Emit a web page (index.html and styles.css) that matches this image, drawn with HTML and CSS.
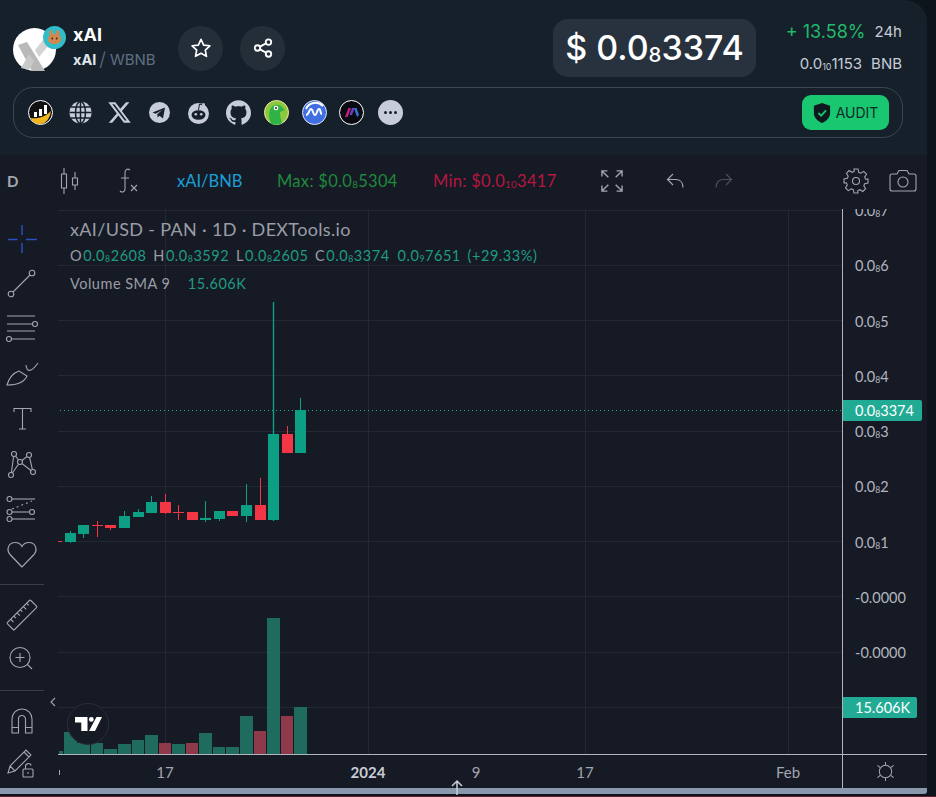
FILE: index.html
```html
<!DOCTYPE html>
<html lang="en">
<head>
<meta charset="utf-8">
<title>xAI / WBNB</title>
<link rel="stylesheet" href="styles.css">
</head>
<body>
<div class="app">
  <header class="head">
    <div class="top">
      <div class="logo">
        <svg class="logo-x" viewBox="0 0 43 43"><circle cx="21.5" cy="21.5" r="21.5" fill="#fff"/><path d="M5 17l9-3 18 29H19z" fill="#b9b9b9"/><path d="M30 12l6 5-10 12-4-7z" fill="#d4d4d4"/><path d="M8 40l8-14 5 7-5 9z" fill="#c9c9c9"/></svg>
        <svg class="badge" viewBox="0 0 23 23"><circle cx="11.5" cy="11.5" r="11.5" fill="#31bcc9"/><path d="M8 4c1.4 0 2 2 2 4h3c0-2 .6-4 2-4s1.800 3 1.300 5.300c1.200 1 1.900 2.300 1.900 3.700 0 3-3 5-6.700 5S4.800 16 4.800 13c0-1.400.7-2.700 1.900-3.700C6.200 7 6.600 4 8 4z" fill="#d1884f"/><circle cx="9.300" cy="12.500" r=".9" fill="#3a2a20"/><circle cx="13.700" cy="12.500" r=".9" fill="#3a2a20"/></svg>
      </div>
      <div class="names">
        <div class="title">xAI</div>
        <div class="pair"><b>xAI</b><i>/</i><span>WBNB</span></div>
      </div>
      <button class="round">
        <svg viewBox="0 0 24 24" class="ic22"><path d="M12 2.500l2.900 6.300 6.800.8-5 4.700 1.300 6.800-6-3.400-6 3.400 1.300-6.800-5-4.700 6.800-.8z" fill="none" stroke="#fff" stroke-width="1.800" stroke-linejoin="round"/></svg>
      </button>
      <button class="round">
        <svg viewBox="0 0 24 24" class="ic22"><g fill="none" stroke="#fff" stroke-width="2"><circle cx="18" cy="5.500" r="3"/><circle cx="6" cy="12" r="3"/><circle cx="18" cy="18.500" r="3"/><path d="M8.700 10.500l6.600-3.500M8.700 13.500l6.600 3.500"/></g></svg>
      </button>
      <div class="price">$ 0.0<sub>8</sub>3374</div>
      <div class="change">
        <div class="row1"><span class="pct">+ 13.58%</span><span>24h</span></div>
        <div class="row2"><span>0.0<sub>10</sub>1153</span><span>BNB</span></div>
      </div>
    </div>
    <nav class="social">
      <div class="links">
        <svg class="sico" viewBox="0 0 25 25"><circle cx="12.500" cy="12.500" r="12" fill="#111" stroke="#fff"/><path d="M3 18c7 1 14-1 20-7-1 7-5 13-11 13-4 0-8-2-9-6z" fill="#efb51e"/><path d="M6 12h3v5H6zM11 9h3v7h-3zM16 5h3v9h-3z" fill="#fff"/></svg>
        <svg class="sico" viewBox="0 0 25 25"><circle cx="12.500" cy="12.500" r="11" fill="#c6ccd8"/><g fill="none" stroke="#16202a" stroke-width="1.500"><ellipse cx="12.500" cy="12.500" rx="5" ry="11"/><path d="M1.500 12.500h22M3 7h19M3 18h19M12.500 1.500v22"/></g></svg>
        <svg class="sico" viewBox="0 0 24 24"><path fill="#c6ccd8" d="M18.244 2.250h3.308l-7.227 8.260 8.502 11.240H16.170l-5.214-6.817L4.990 21.750H1.680l7.730-8.835L1.254 2.250H8.080l4.713 6.231zm-1.161 17.520h1.833L7.084 4.126H5.117z"/></svg>
        <svg class="sico" viewBox="0 0 25 25"><circle cx="12.500" cy="12.500" r="10.500" fill="#c6ccd8"/><path d="M5.500 12.500l12.500-5-2 11-3.500-2.800-1.800 1.800-.5-3.200 5-4.300-6.500 3.800z" fill="#16202a"/></svg>
        <svg class="sico" viewBox="0 0 25 25"><circle cx="12.500" cy="13.500" r="10.500" fill="#c6ccd8"/><ellipse cx="12.500" cy="15" rx="7" ry="4.800" fill="#16202a"/><circle cx="9.800" cy="14.300" r="1.300" fill="#c6ccd8"/><circle cx="15.200" cy="14.300" r="1.300" fill="#c6ccd8"/><path d="M12.500 10l1-6 3.500 1" fill="none" stroke="#16202a" stroke-width="1"/><circle cx="17.500" cy="4.500" r="1.500" fill="#c6ccd8"/></svg>
        <svg class="sico" viewBox="0 0 24 24"><path fill="#c6ccd8" d="M12 .297c-6.630 0-12 5.373-12 12 0 5.303 3.438 9.800 8.205 11.385.6.113.82-.258.82-.577 0-.285-.01-1.040-.015-2.040-3.338.724-4.042-1.610-4.042-1.610C4.422 18.070 3.633 17.700 3.633 17.700c-1.087-.744.084-.729.084-.729 1.205.084 1.838 1.236 1.838 1.236 1.070 1.835 2.809 1.305 3.495.998.108-.776.417-1.305.76-1.605-2.665-.3-5.466-1.332-5.466-5.930 0-1.310.465-2.380 1.235-3.220-.135-.303-.54-1.523.105-3.176 0 0 1.005-.322 3.300 1.230.96-.267 1.980-.399 3-.405 1.020.006 2.040.138 3 .405 2.280-1.552 3.285-1.230 3.285-1.230.645 1.653.24 2.873.12 3.176.765.84 1.230 1.910 1.230 3.220 0 4.610-2.805 5.625-5.475 5.920.42.36.81 1.096.81 2.220 0 1.606-.015 2.896-.015 3.286 0 .315.21.69.825.57C20.565 22.092 24 17.592 24 12.297c0-6.627-5.373-12-12-12"/></svg>
        <svg class="sico" viewBox="0 0 25 25"><circle cx="12.500" cy="12.500" r="12" fill="#8dc63f" stroke="#f0eda0"/><path d="M7 24c-2-6-3-12 0-16 3-4 8-4 11-1 1 1 2 3 3 3l-5 2c0 4 1 8 2 11-3 2-8 2-11 1z" fill="#2fb344"/><circle cx="12" cy="8" r="2.300" fill="#fff"/><circle cx="12" cy="8" r="1" fill="#222"/></svg>
        <svg class="sico" viewBox="0 0 25 25"><circle cx="12.500" cy="12.500" r="12" fill="#3f6fe0" stroke="#dfe6f8"/><path d="M4 15c3 0 3-6 5-6s2 6 4 6 2-6 4-6 1 5 3 5" fill="none" stroke="#fff" stroke-width="2"/><path d="M21 6c-5-5-14-4-17 3" fill="none" stroke="#fff" stroke-width="2"/></svg>
        <svg class="sico" viewBox="0 0 25 25"><circle cx="12.500" cy="12.500" r="12" fill="#0a0a12" stroke="#fff"/><path d="M6 17l3.500-9h2.500l-3.500 9z" fill="#c2257f"/><path d="M10.500 15l2.500-7h2.500l-2.500 7z" fill="#7a3bd0"/><path d="M15 8h2.500l2.500 7-2 2z" fill="#3077d8"/></svg>
        <svg class="sico" viewBox="0 0 25 25"><circle cx="12.500" cy="12.500" r="12.500" fill="#c6ccd8"/><circle cx="7.500" cy="12.500" r="1.500" fill="#16202a"/><circle cx="12.500" cy="12.500" r="1.500" fill="#16202a"/><circle cx="17.500" cy="12.500" r="1.500" fill="#16202a"/></svg>
      </div>
      <button class="audit">
        <svg viewBox="0 0 20 22" class="shield"><path d="M10 0l9 3v8c0 5-4 9-9 11-5-2-9-6-9-11V3z" fill="#10181f"/><path d="M6 11l3 3 5.500-6" fill="none" stroke="#18c76f" stroke-width="2"/></svg>
        AUDIT
      </button>
    </nav>
  </header>

  <section class="toolbar">
    <span class="interval">D</span>
    <svg class="tb tb-candle" viewBox="0 0 22 28"><path d="M5 1v6M5 21v6M2.500 7h5v14h-5zM16 5v6M16 18v5M13.500 11h5v7h-5z" fill="none" stroke="#a3a6af" stroke-width="1.100"/></svg>
    <svg class="tb tb-fx" viewBox="0 0 24 28"><path d="M13 3c-3-2-5 0-5 3v16c0 3-3 4-5 2M4 11h8M14 18l6 6M20 18l-6 6" fill="none" stroke="#a3a6af" stroke-width="1.100"/></svg>
    <span class="sym">xAI/BNB</span>
    <span class="max">Max: $0.0<sub>8</sub>5304</span>
    <span class="min">Min: $0.0<sub>10</sub>3417</span>
    <svg class="tb tb-exp" viewBox="0 0 24 24"><g fill="none" stroke="#a3a6af" stroke-width="1.500"><path d="M1 7V1h6M1 1l7 7M23 7V1h-6M23 1l-7 7M1 17v6h6M1 23l7-7M23 17v6h-6M23 23l-7-7"/></g></svg>
    <svg class="tb tb-undo" viewBox="0 0 20 18"><path d="M7 2L1.500 7.500 7 13M2 7.500h8c4 0 7 3 7 8" fill="none" stroke="#a3a6af" stroke-width="1.200"/></svg>
    <svg class="tb tb-redo" viewBox="0 0 20 18"><path d="M13 2l5.500 5.500L13 13M18 7.500h-8c-4 0-7 3-7 8" fill="none" stroke="#4d505a" stroke-width="1.200"/></svg>
    <svg class="tb tb-gear" viewBox="0 0 26 26"><g fill="none" stroke="#a3a6af" stroke-width="1.100"><circle cx="13" cy="13" r="3.500"/><path d="M11 1h4l.7 3.300 2.100.9 2.900-1.800 2.800 2.800-1.800 2.900.9 2.100L25 11v4l-3.300.7-.9 2.100 1.800 2.900-2.800 2.800-2.900-1.800-2.100.9L15 25h-4l-.7-3.300-2.100-.9-2.900 1.800-2.800-2.800 1.800-2.900-.9-2.100L1 15v-4l3.300-.7.9-2.100-1.800-2.900 2.800-2.800 2.900 1.800 2.100-.9z"/></g></svg>
    <svg class="tb tb-cam" viewBox="0 0 28 24"><g fill="none" stroke="#a3a6af" stroke-width="1.100"><path d="M3 5h5l2-3.500h8L20 5h5c1 0 2 1 2 2v13c0 1-1 2-2 2H3c-1 0-2-1-2-2V7c0-1 1-2 2-2z"/><circle cx="14" cy="13" r="5"/></g></svg>
  </section>

  <main class="chart">
    <aside class="tools">
      <div class="tool-group first">
        <div class="tool"><svg viewBox="0 0 30 30"><path d="M15 1v10M15 19v10M1 15.500h9.500M19 15.500h11" fill="none" stroke="#2b52c4" stroke-width="1.400"/></svg></div>
        <div class="tool"><svg viewBox="0 0 30 30"><g class="st"><circle cx="4" cy="25" r="2.800"/><circle cx="25" cy="4" r="2.800"/><path d="M6 23L23 6"/></g></svg></div>
        <div class="tool"><svg viewBox="0 0 30 30"><g class="st"><path d="M0 2h28M0 10h25.500M0 17h28M4.500 25H28"/><circle cx="28" cy="10" r="2.500"/><circle cx="2" cy="25" r="2.500"/></g></svg></div>
        <div class="tool"><svg viewBox="0 0 30 30"><g class="st"><path d="M0 26C2 19 6 14 12 12l8 5c-3 7-10 9-20 9zM19 6c.5 6 4 9 12-2"/></g></svg></div>
        <div class="tool"><svg viewBox="0 0 30 30"><g class="st"><path d="M7 8V4.500h17V8M15.500 4.500V25M12 25h7"/></g></svg></div>
        <div class="tool"><svg viewBox="0 0 30 30"><g class="st"><path d="M4 26L7 5l6 8 9-7 4 17-13-10z"/><circle cx="7" cy="5" r="2.500" class="bgf"/><circle cx="22" cy="6" r="2.500" class="bgf"/><circle cx="13" cy="13" r="2.500" class="bgf"/><circle cx="4" cy="26" r="2.500" class="bgf"/><circle cx="26" cy="23" r="2.500" class="bgf"/></g></svg></div>
        <div class="tool"><svg viewBox="0 0 30 30"><g class="st"><circle cx="2.500" cy="5" r="2.500"/><path d="M5 5h23"/><circle cx="2.500" cy="18" r="2.500"/><path d="M5 18h17"/><circle cx="25" cy="18" r="2.500"/><circle cx="2.500" cy="25" r="2.500"/><path d="M5 25h23"/><path d="M5 15l20-8" stroke-dasharray="2 3"/></g></svg></div>
        <div class="tool"><svg viewBox="0 0 30 30"><path d="M15 28L3 15.500C-1 10.500 1.500 3.500 8 3.500c3.500 0 6 2 7 4 1-2 3.500-4 7-4 6.500 0 9 7 5 12z" fill="none" stroke="#a3a6af" stroke-width="1.200"/></svg></div>
      </div>
      <hr class="sep">
      <div class="tool-group second">
        <div class="tool"><svg viewBox="0 0 30 30"><g class="st" transform="rotate(-45 15 15)"><rect x="-1.500" y="10" width="33" height="10" rx="1"/><path d="M4 10v4M8.500 10v3M13 10v4M17.500 10v3M22 10v4M26.500 10v3"/></g></svg></div>
        <div class="tool"><svg viewBox="0 0 30 30"><g class="st"><circle cx="13" cy="13.500" r="10"/><path d="M8.500 13.500h9M13 9v9M20.500 20.500L25 25"/></g></svg></div>
      </div>
      <hr class="sep">
      <div class="tool-group third">
        <div class="tool"><svg viewBox="0 0 30 30"><g class="st"><path d="M5 27V13a10 10 0 0 1 20 0v14h-6.500V13a3.500 3.500 0 0 0-7 0v14zM5 21.500h6.500M18.500 21.500H25"/></g></svg></div>
        <div class="tool"><svg viewBox="0 0 30 30"><g class="st"><path d="M1 25l2-7L19 2l5 5L8 23zM3 18l5 5M17 4l5 5"/><rect x="16" y="21" width="10" height="8" rx="1"/><path d="M18.500 21v-2.500a3 3 0 0 1 5.800-1M21 24v2"/></g></svg></div>
      </div>
      <svg class="collapse" viewBox="0 0 6 10"><path d="M5 1L1 5l4 4" fill="none" stroke="#a3a6af" stroke-width="1.100"/></svg>
    </aside>

    <div class="pane">
      <svg class="plot" viewBox="58 208 784 546" preserveAspectRatio="none">
        <g class="grid">
          <path d="M58 210.500H842M58 265.500H842M58 320.500H842M58 375.500H842M58 431.500H842M58 486.500H842M58 541.500H842M58 596.500H842M58 652.500H842M58 707.500H842"/>
          <path d="M165.500 208V754M368.500 208V754M585.500 208V754M788.500 208V754"/>
        </g>
        <path d="M60 410.500H842" class="last"/>
        <g class="vol-up">
          <rect x="59" y="751" width="4" height="3"/><rect x="64" y="732" width="13" height="22"/><rect x="77" y="743" width="13" height="11"/><rect x="91" y="743" width="12" height="11"/><rect x="104" y="749" width="13" height="5"/><rect x="118" y="744" width="13" height="10"/><rect x="132" y="740" width="12" height="14"/><rect x="145" y="735" width="13" height="19"/><rect x="172" y="744" width="13" height="10"/><rect x="199" y="733" width="13" height="21"/><rect x="213" y="747" width="12" height="7"/><rect x="226" y="747" width="13" height="7"/><rect x="240" y="716" width="13" height="38"/><rect x="267" y="618" width="13" height="136"/><rect x="294" y="707" width="13" height="47"/>
        </g>
        <g class="vol-dn">
          <rect x="159" y="743" width="12" height="11"/><rect x="186" y="743" width="12" height="11"/><rect x="254" y="731" width="12" height="23"/><rect x="281" y="716" width="12" height="38"/>
        </g>
        <g class="c-up">
          <rect x="65" y="533" width="11" height="9"/><rect x="70" y="531" width="1" height="12"/>
          <rect x="78" y="525" width="11" height="9"/><rect x="83" y="525" width="1" height="13"/>
          <rect x="119" y="516" width="11" height="12"/><rect x="124" y="511" width="1" height="17"/>
          <rect x="133" y="512" width="11" height="5"/><rect x="138" y="509" width="1" height="8"/>
          <rect x="146" y="502" width="11" height="11"/><rect x="151" y="496" width="1" height="17"/>
          <rect x="200" y="518" width="11" height="2"/><rect x="205" y="501" width="1" height="21"/>
          <rect x="214" y="511" width="11" height="8"/><rect x="219" y="511" width="1" height="10"/>
          <rect x="241" y="505" width="11" height="11"/><rect x="246" y="484" width="1" height="38"/>
          <rect x="268" y="434" width="11" height="86"/><rect x="272.800" y="302" width="1.400" height="219"/>
          <rect x="295" y="410" width="11" height="43"/><rect x="300" y="398" width="1" height="55"/>
        </g>
        <g class="c-dn">
          <rect x="58" y="541" width="4" height="1"/>
          <rect x="92" y="525" width="11" height="1"/><rect x="97" y="521" width="1" height="16"/>
          <rect x="105" y="525" width="11" height="3"/><rect x="110" y="525" width="1" height="5"/>
          <rect x="160" y="502" width="11" height="11"/><rect x="165" y="494" width="1" height="20"/>
          <rect x="173" y="512" width="11" height="1"/><rect x="178" y="505" width="1" height="15"/>
          <rect x="187" y="512" width="11" height="8"/>
          <rect x="227" y="511" width="11" height="5"/>
          <rect x="255" y="505" width="11" height="15"/><rect x="260" y="478" width="1" height="42"/>
          <rect x="282" y="434" width="11" height="19"/><rect x="287" y="426" width="1" height="27"/>
        </g>
      </svg>
      <div class="legend">
        <div class="l-title">xAI/USD - PAN · 1D · DEXTools.io</div>
        <div class="l-ohlc">O<em>0.0<sub>8</sub>2608</em> H<em>0.0<sub>8</sub>3592</em> L<em>0.0<sub>8</sub>2605</em> C<em>0.0<sub>8</sub>3374</em> <em>0.0<sub>9</sub>7651 (+29.33%)</em></div>
        <div class="l-vol">Volume SMA 9 <em>15.606K</em></div>
      </div>
      <div class="tvlogo">
        <svg viewBox="0 0 27 14"><path d="M0 0h12.500v14H6.300V5.500H0zM21.500 0h5.500l-7 14h-6z" fill="#fff"/><circle cx="16.300" cy="2.400" r="2.400" fill="#fff"/></svg>
      </div>
    </div>

    <div class="axis">
      <div class="ticks">
        <div>0.0<sub>8</sub>7</div><div>0.0<sub>8</sub>6</div><div>0.0<sub>8</sub>5</div><div>0.0<sub>8</sub>4</div><div>0.0<sub>8</sub>3</div><div>0.0<sub>8</sub>2</div><div>0.0<sub>8</sub>1</div><div>-0.0000</div><div>-0.0000</div>
      </div>
      <div class="tag tag-price">0.0<sub>8</sub>3374</div>
      <div class="tag tag-vol">15.606K</div>
    </div>

    <div class="times">
      <span class="t1">17</span><span class="t2">2024</span><span class="t3">9</span><span class="t4">17</span><span class="t5">Feb</span>
    </div>
    <div class="corner">
      <svg viewBox="0 0 20 20"><g fill="none" stroke="#a3a6af" stroke-width="1.100"><circle cx="10" cy="10" r="6.500"/><path d="M10 0v3.500M10 16.500V20M1.500 3.500l3 2.500M18.500 3.500l-3 2.500M1.500 16.500l3-2.500M18.500 16.500l-3-2.500"/></g></svg>
    </div>
  </main>
  <div class="scroll"></div>
  <svg class="uparrow" viewBox="0 0 14 16"><path d="M7 16V2M2 7l5-5 5 5" fill="none" stroke="#c6ccd8" stroke-width="1.500"/></svg>
</div>
<div class="redline"></div>
</body>
</html>
```

FILE: styles.css
```css
* { box-sizing: border-box; }
html, body { margin: 0; padding: 0; }
body {
  width: 936px;
  height: 797px;
  overflow: hidden;
  background: #0d141b;
  position: relative;
  font-family: "Inter", "Liberation Sans", sans-serif;
}
sub {
  font-size: 60%;
  line-height: 0;
  vertical-align: -0.12em;
}
.app { width: 927px; height: 796px; display: flex; flex-direction: column; position: relative; }

/* header */
.head {
  height: 155px;
  flex: none;
  background: #16202a;
  border-top-right-radius: 22px;
  padding: 19px 24px 0 13px;
  color: #fff;
}
.top { display: flex; align-items: center; height: 58px; }
.logo { position: relative; width: 43px; height: 43px; margin-top: 2px; flex: none; }
.logo-x { width: 43px; height: 43px; display: block; }
.badge { position: absolute; left: 30px; width: 23px; height: 23px; top: -2px; }
.names { margin-left: 17px; width: 105px; }
.title { font-size: 18px; font-weight: 700; line-height: 22px; margin-top: -2px; }
.pair { font-size: 15px; line-height: 20px; margin-top: 4px; color: #5f6f85; display: flex; align-items: center; white-space: nowrap; }
.pair b { color: #dfe4ec; font-weight: 700; font-size: 14.500px; }
.pair i { font-style: normal; font-size: 19px; font-weight: 300; margin: 0 4px 0 3px; line-height: 18px; }
.round {
  width: 45px; height: 45px; border-radius: 50%; border: 0; padding: 0;
  background: #232e39; margin-right: 18px;
  display: flex; align-items: center; justify-content: center; flex: none;
}
.round + .round { margin-left: -1px; }
.ic22 { width: 22px; height: 22px; }
.price {
  margin-left: auto;
  width: 203px; height: 58px;
  background: #27323e; border-radius: 15px;
  font-size: 34px; font-weight: 500; line-height: 58px; text-align: center; color: #fff;
  white-space: nowrap;
}
.change { width: 119px; margin-left: 27px; margin-right: 1px; font-size: 15px; color: #c6ccd8; }
.row1, .row2 { display: flex; justify-content: flex-end; white-space: nowrap; }
.row1 { gap: 9px; line-height: 26px; }
.row2 { gap: 9px; line-height: 26px; margin-top: 6px; }
.pct { color: #20b96b; font-size: 18px; }

.social {
  margin-top: 10px;
  width: 890px; height: 51px;
  border: 1px solid #3a4652;
  border-radius: 20px;
  display: flex; align-items: center; justify-content: space-between;
  padding: 0 13px 0 14px;
}
.links { display: flex; align-items: center; gap: 14.500px; }
.sico { width: 25px; height: 25px; display: block; flex: none; }
.sico:nth-child(7) { margin-left: -1px; }
.sico:nth-child(8) { margin-left: -2px; }
.sico:nth-child(9) { margin-left: -2.500px; }
.audit {
  width: 87px; height: 35px;
  background: #18c76f; border: 0; border-radius: 9px;
  color: #14282a; font: 400 14px "Inter", sans-serif;
  display: flex; align-items: center; justify-content: center; gap: 5px; padding: 0;
}
.shield { width: 18px; height: 20px; }

/* top chart toolbar */
.toolbar {
  height: 54px; flex: none;
  padding-bottom: 2px;
  background: #161a25;
  display: flex; align-items: center;
  font-family: "Lato", "Liberation Sans", sans-serif;
  font-size: 16.500px;
  white-space: nowrap;
}
.interval { margin-left: 7px; font-weight: 700; color: #a3a6af; font-size: 15px; width: 11px; }
.tb { display: block; flex: none; }
.tb-candle { width: 22px; height: 28px; margin-left: 41px; }
.tb-fx { width: 24px; height: 28px; margin-left: 36px; }
.sym { color: #1aa0d8; margin-left: 36px; width: 100px; }
.max { color: #1f8a3c; width: 156px; letter-spacing: .3px; }
.min { color: #b5173f; width: 166px; letter-spacing: .3px; }
.tb-exp { width: 22px; height: 22px; margin-left: 2px; }
.tb-undo { width: 20px; height: 18px; margin-left: 43px; }
.tb-redo { width: 20px; height: 18px; margin-left: 27px; }
.tb-gear { width: 26px; height: 26px; margin-left: 110px; }
.tb-cam { width: 28px; height: 24px; margin-left: 20px; }

/* chart */
.chart {
  flex: 1;
  background: #161a25;
  display: grid;
  grid-template-columns: 58px 784px 85px;
  grid-template-rows: 545px 34px;
  min-height: 0;
}
.tools { grid-row: 1 / 3; position: relative; width: 58px; }
.tool-group { width: 44px; }
.first { padding-top: 7.500px; }
.tool { height: 45px; display: flex; align-items: center; justify-content: center; }
.tool svg { width: 30px; height: 30px; overflow: visible; display: block; }
.st { fill: none; stroke: #a3a6af; stroke-width: 1.100; }
.bgf { fill: #161a25; }
.sep { width: 44px; height: 1px; background: #3a3e49; border: 0; margin: 0; }
.first + .sep { margin-top: 7px; }
.second .tool { height: 44px; }
.second { padding-top: 8px; padding-bottom: 9px; }
.third { padding-top: 9px; }
.third .tool { height: 42px; }
.collapse { position: absolute; left: 50px; top: 488px; width: 6px; height: 10px; }

.pane { position: relative; overflow: hidden; }
.plot { width: 784px; height: 546px; display: block; position: absolute; left: 0; top: -1px; }
.grid path { stroke: #242833; stroke-width: 1; fill: none; }
.last { stroke: #22ab94; stroke-width: 1; stroke-dasharray: 1 3; fill: none; }
.vol-up rect { fill: #1f6b5e; }
.vol-dn rect { fill: #8f3a4a; }
.c-up rect { fill: #0d9f83; }
.c-dn rect { fill: #f23645; }
.legend {
  position: absolute; left: 12px; top: 7px;
  font-family: "Lato", "Liberation Sans", sans-serif;
  color: #9a9da6; white-space: nowrap;
}
.legend em { font-style: normal; color: #1f9b82; }
.l-title { font-size: 18px; line-height: 26px; letter-spacing: .33px; }
.l-ohlc { font-size: 14.500px; line-height: 22px; margin-top: 3px; letter-spacing: .55px; word-spacing: 2.500px; }
.l-ohlc em { margin-left: 1px; }
.l-vol { font-size: 14.500px; line-height: 22px; margin-top: 6px; letter-spacing: .5px; }
.l-vol em { margin-left: 13px; }
.tvlogo {
  position: absolute; left: 9px; top: 494px;
  width: 42px; height: 42px; border-radius: 50%;
  background: #161a25; border: 1.500px solid #2a2e39;
  display: flex; align-items: center; justify-content: center;
}
.tvlogo svg { width: 27px; height: 14px; }

.axis {
  position: relative; overflow: hidden;
  border-left: 1px solid #b2b5be;
  font-family: "Lato", "Liberation Sans", sans-serif;
  color: #b2b5be; font-size: 14.500px;
}
.ticks { margin-top: -26px; padding-left: 12px; }
.ticks div { height: 55.300px; line-height: 55.300px; white-space: nowrap; }
.tag {
  position: absolute; left: 0; height: 21px; line-height: 21px;
  background: #22ab94; color: #fff; padding-left: 12px;
  font-size: 14.500px; border-radius: 0 2px 2px 0; white-space: nowrap;
}
.tag-price { top: 191px; width: 79px; }
.tag-vol { top: 488px; width: 74px; }

.times {
  display: grid;
  grid-template-columns: 214px 192px 24px 194px 52px 108px;
  border-top: 1px solid #b2b5be;
  font-family: "Lato", "Liberation Sans", sans-serif;
  font-size: 15px; color: #a3a6af; line-height: 34px; text-align: center;
  position: relative;
}
.times::before {
  content: "";
  position: absolute; left: 1px; top: 15px; width: 1px; height: 5px;
  background: #a3a6af;
}
.t1 { grid-column: 1; }
.t2 { grid-column: 2; font-weight: 700; color: #c9ccd4; }
.t3 { grid-column: 3; }
.t4 { grid-column: 4; }
.t5 { grid-column: 6; }
.corner {
  border-top: 1px solid #b2b5be; border-left: 1px solid #b2b5be;
  display: flex; align-items: center; justify-content: center;
}
.corner svg { width: 19px; height: 19px; }

.scroll { height: 6px; flex: none; margin-bottom: 2px; background: #8a98ae; border-bottom-right-radius: 3px; }
.uparrow { position: absolute; left: 450px; top: 779px; width: 14px; height: 16px; }
.redline { position: absolute; left: 0; right: 0; bottom: 0; height: 1px; background: #5a1f2e; }
```
